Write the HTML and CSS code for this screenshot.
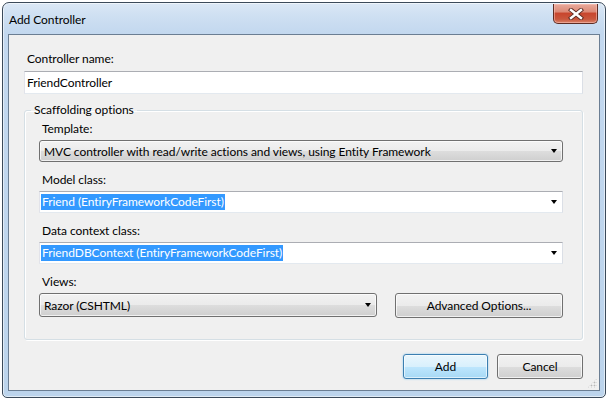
FILE: index.html
```html
<!DOCTYPE html>
<html>
<head>
<meta charset="utf-8">
<link rel="stylesheet" href="styles.css">
</head>
<body>
<div class="window">
  <div class="titlebar">
    <span class="title">Add Controller</span>
    <div class="close">
      <svg width="16" height="12" viewBox="0 0 16 12">
        <path d="M3 2 L13 10 M13 2 L3 10" stroke="#5a2a22" stroke-width="4.2" stroke-linecap="square" fill="none"/>
        <path d="M3 2 L13 10 M13 2 L3 10" stroke="#ffffff" stroke-width="2.4" stroke-linecap="square" fill="none"/>
      </svg>
    </div>
  </div>
  <div class="content">
    <div class="label first">Controller name:</div>
    <div class="textbox">FriendController</div>
    <fieldset class="group">
      <legend>Scaffolding options</legend>
      <div class="label">Template:</div>
      <div class="dropdown">
        <span>MVC controller with read/write actions and views, using Entity Framework</span>
        <span class="arrow"></span>
      </div>
      <div class="label">Model class:</div>
      <div class="combo">
        <span class="sel">Friend (EntiryFrameworkCodeFirst)</span>
        <span class="arrow"></span>
      </div>
      <div class="label">Data context class:</div>
      <div class="combo">
        <span class="sel">FriendDBContext (EntiryFrameworkCodeFirst)</span>
        <span class="arrow"></span>
      </div>
      <div class="label">Views:</div>
      <div class="row">
        <div class="dropdown views">
          <span>Razor (CSHTML)</span>
          <span class="arrow"></span>
        </div>
        <div class="button adv">Advanced Options...</div>
      </div>
    </fieldset>
    <div class="actions">
      <div class="button default">Add</div>
      <div class="button">Cancel</div>
    </div>
    <div class="grip"></div>
  </div>
</div>
</body>
</html>
```
FILE: styles.css
```css
html, body {
  margin: 0;
  padding: 0;
  background: #ffffff;
}
body {
  font-family: "Lato", "Liberation Sans", sans-serif;
  font-size: 12px;
  letter-spacing: -0.06px;
  color: #000;
}
.window {
  margin: 2px 0 0 2px;
  width: 604px;
  height: 396px;
  box-sizing: border-box;
  border: 1px solid #3b4a5a;
  border-radius: 7px 7px 5px 5px;
  background: linear-gradient(180deg, #dbe8f6 0px, #cfe0f2 12px, #c3d8ef 30px, #bcd4ec 100%);
  padding: 0 5px 6px 5px;
  display: flex;
  flex-direction: column;
  box-shadow: inset 0 0 0 1px rgba(255,255,255,0.55);
}
.titlebar {
  height: 31px;
  display: flex;
  align-items: flex-start;
  flex-shrink: 0;
}
.title {
  padding: 9px 0 0 1px;
  line-height: 16px;
  color: #000;
}
.close {
  margin-left: auto;
  margin-top: 1px;
  margin-right: 2px;
  width: 45px;
  height: 20px;
  box-sizing: border-box;
  border: 1px solid #5d2c23;
  border-top: none;
  border-radius: 0 0 5px 5px;
  background: linear-gradient(180deg, #e9aa9c 0%, #dc8a77 40%, #c8462e 50%, #c9573d 80%, #d9836a 100%);
  box-shadow: inset 0 0 0 1px rgba(255,200,190,0.5);
  display: flex;
  align-items: center;
  justify-content: center;
}
.content {
  position: relative;
  flex: 1;
  background: #f0f0f0;
  border: 1px solid #6b7e93;
  padding: 14px 16px 0 15px;
  display: flex;
  flex-direction: column;
}
.label {
  line-height: 16px;
  padding-left: 3px;
  margin-top: 10px;
  margin-bottom: 3px;
}
.label.first {
  margin-top: 2px;
  margin-bottom: 4px;
}
.textbox {
  height: 23px;
  box-sizing: border-box;
  background: #fff;
  border: 1px solid #abadb3;
  border-color: #abadb3 #dbdfe6 #e3e9ef #e2e3ea;
  line-height: 21px;
  padding-left: 2px;
}
.group {
  margin: 8px 0 0 0;
  padding: 0 19px 21px 14px;
  border: 1px solid #d5dfe5;
  border-radius: 3px;
  box-shadow: inset 1px 1px 0 #fff, 1px 1px 0 #fff;
  min-width: 0;
}
.group legend {
  padding: 0 3px;
  margin-left: -8px;
  line-height: 16px;
}
.group .label:first-of-type {
  margin-top: 3px;
}
.dropdown {
  height: 22px;
  box-sizing: border-box;
  border: 1px solid #707070;
  border-radius: 3px;
  background: linear-gradient(180deg, #f2f2f2 0%, #ebebeb 50%, #dddddd 51%, #cfcfcf 100%);
  box-shadow: inset 0 0 0 1px rgba(255,255,255,0.7);
  display: flex;
  align-items: center;
  padding-left: 4px;
  position: relative;
}
.combo {
  height: 22px;
  box-sizing: border-box;
  background: #fff;
  border: 1px solid #abadb3;
  border-color: #abadb3 #dbdfe6 #e3e9ef #e2e3ea;
  display: flex;
  align-items: center;
  padding-left: 1px;
  position: relative;
}
.sel {
  background: #3399ff;
  color: #fff;
  line-height: 16px;
  padding: 0 1px;
}
.arrow {
  margin-left: auto;
  margin-right: 5px;
  width: 0;
  height: 0;
  border-left: 3.5px solid transparent;
  border-right: 3.5px solid transparent;
  border-top: 4px solid #000;
}
.row {
  display: flex;
  gap: 18px;
  margin-top: 2px;
}
.views {
  width: 338px;
  height: 24px;
}
.button {
  height: 24px;
  box-sizing: border-box;
  border: 1px solid #707070;
  border-radius: 3px;
  background: linear-gradient(180deg, #f2f2f2 0%, #ebebeb 50%, #dddddd 51%, #cfcfcf 100%);
  box-shadow: inset 0 0 0 1px rgba(255,255,255,0.7);
  display: flex;
  align-items: center;
  justify-content: center;
}
.adv {
  flex: 1;
  height: 25px;
}
.actions {
  display: flex;
  justify-content: flex-end;
  gap: 9px;
  margin-top: 14px;
  padding-right: 0;
}
.actions .button {
  width: 86px;
  height: 25px;
}
.button.default {
  width: 85px;
  border-color: #3c7fb1;
  background: linear-gradient(180deg, #eaf6fd 0%, #d9f0fc 50%, #bee6fd 51%, #a7d9f5 100%);
  box-shadow: inset 0 0 0 1px rgba(255,255,255,0.6), 0 0 2px #7fc4ef;
}
.grip {
  position: absolute;
  right: 2px;
  bottom: 2px;
  width: 10px;
  height: 10px;
  background-image: radial-gradient(circle, #b8b8b8 0.8px, transparent 1.1px);
  background-size: 3px 3px;
  clip-path: polygon(100% 0, 100% 100%, 0 100%);
}
```
